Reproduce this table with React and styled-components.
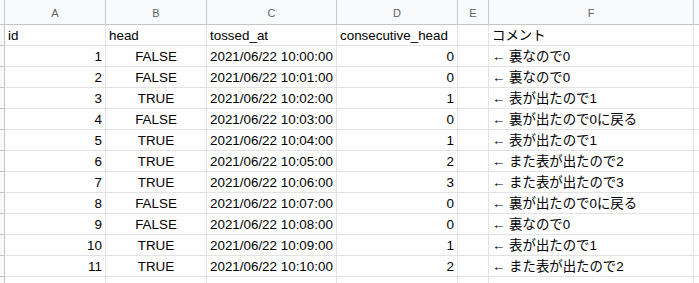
import React from 'react';
import styled, { createGlobalStyle } from 'styled-components';

const COLS = '5px 101px 101px 130px 121px 31px 205px 6px';

const GlobalStyle = createGlobalStyle`
    html, body {
        margin: 0;
        padding: 0;
        background: #fff;
        overflow: hidden;
    }
`;

const Sheet = styled.div`
    width: 699px;
    height: 283px;
    overflow: hidden;
    font-family: "Liberation Sans", Arial, "Noto Sans CJK JP", sans-serif;
`;

const HeaderRow = styled.div`
    display: grid;
    grid-template-columns: ${ COLS };
    height: 25px;
    background: #f8f9fa;
`;

const HeaderCell = styled.div`
    box-sizing: border-box;
    border-right: 1px solid #c4c7c5;
    border-bottom: 1px solid #c4c7c5;
    display: flex;
    align-items: center;
    justify-content: center;
    padding-top: 1px;
    font-size: 11px;
    color: #5f6368;
`;

const Row = styled.div`
    display: grid;
    grid-template-columns: ${ COLS };
    height: 21px;
`;

const RowHead = styled.div`
    box-sizing: border-box;
    background: #f8f9fa;
    border-right: 1px solid #c4c7c5;
    border-bottom: 1px solid #c4c7c5;
`;

const Cell = styled.div`
    box-sizing: border-box;
    border-right: 1px solid #e2e3e3;
    border-bottom: 1px solid #e2e3e3;
    padding: 0 3px 1px;
    display: flex;
    align-items: flex-end;
    justify-content: ${ p => p.align === 'right' ? 'flex-end' : p.align === 'center' ? 'center' : 'flex-start' };
    font-size: 13.4px;
    line-height: 16px;
    color: #000;
    white-space: nowrap;
    overflow: hidden;
`;

const data = [
    [1, 'FALSE', '2021/06/22 10:00:00', 0, '← 裏なので0'],
    [2, 'FALSE', '2021/06/22 10:01:00', 0, '← 裏なので0'],
    [3, 'TRUE', '2021/06/22 10:02:00', 1, '← 表が出たので1'],
    [4, 'FALSE', '2021/06/22 10:03:00', 0, '← 裏が出たので0に戻る'],
    [5, 'TRUE', '2021/06/22 10:04:00', 1, '← 表が出たので1'],
    [6, 'TRUE', '2021/06/22 10:05:00', 2, '← また表が出たので2'],
    [7, 'TRUE', '2021/06/22 10:06:00', 3, '← また表が出たので3'],
    [8, 'FALSE', '2021/06/22 10:07:00', 0, '← 裏が出たので0に戻る'],
    [9, 'FALSE', '2021/06/22 10:08:00', 0, '← 裏なので0'],
    [10, 'TRUE', '2021/06/22 10:09:00', 1, '← 表が出たので1'],
    [11, 'TRUE', '2021/06/22 10:10:00', 2, '← また表が出たので2'],
];

const letters = ['A', 'B', 'C', 'D', 'E', 'F', ''];

export default function App() {
    return (
        <Sheet>
            <GlobalStyle />
            <HeaderRow>
                <HeaderCell />
                {letters.map((l, i) => <HeaderCell key={i}>{l}</HeaderCell>)}
            </HeaderRow>
            <Row>
                <RowHead />
                <Cell>id</Cell>
                <Cell>head</Cell>
                <Cell>tossed_at</Cell>
                <Cell>consecutive_head</Cell>
                <Cell />
                <Cell>コメント</Cell>
                <Cell />
            </Row>
            {data.map(([id, head, at, n, note]) => (
                <Row key={id}>
                    <RowHead />
                    <Cell align="right">{id}</Cell>
                    <Cell align="center">{head}</Cell>
                    <Cell>{at}</Cell>
                    <Cell align="right">{n}</Cell>
                    <Cell />
                    <Cell>{note}</Cell>
                    <Cell />
                </Row>
            ))}
            <Row>
                <RowHead />
                {letters.map((l, i) => <Cell key={i} />)}
            </Row>
        </Sheet>
    );
}
